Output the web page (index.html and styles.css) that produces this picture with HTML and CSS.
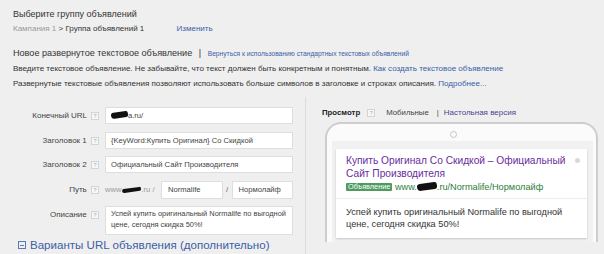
FILE: index.html
```html
<!DOCTYPE html>
<html lang="ru">
<head>
  <meta charset="UTF-8">
  <title>Новое объявление</title>
  <link rel="stylesheet" href="styles.css">
</head>
<body>

  <div class="header">
    <div class="title">Выберите группу объявлений</div>
    <div class="crumbs">
      <span class="muted">Кампания 1</span> &gt; Группа объявлений 1
      <a href="#" class="link change-link">Изменить</a>
    </div>
  </div>

  <div class="intro">
    <div class="heading">Новое развернутое текстовое объявление <span class="sep">|</span> <a href="#" class="link small-link">Вернуться к использованию стандартных текстовых объявлений</a></div>
    <p>Введите текстовое объявление. Не забывайте, что текст должен быть конкретным и понятным. <a href="#" class="link">Как создать текстовое объявление</a></p>
    <p>Развернутые текстовые объявления позволяют использовать больше символов в заголовке и строках описания. <a href="#" class="link">Подробнее...</a></p>
  </div>

  <div class="editor">
    <div class="form">
      <div class="row">
        <label class="label">Конечный URL <span class="help">?</span></label>
        <div class="field"><span class="blot"></span>a.ru/</div>
      </div>
      <div class="row">
        <label class="label">Заголовок 1 <span class="help">?</span></label>
        <div class="field">{KeyWord:Купить Оригинал} Со Скидкой</div>
      </div>
      <div class="row">
        <label class="label">Заголовок 2 <span class="help">?</span></label>
        <div class="field">Официальный Сайт Производителя</div>
      </div>
      <div class="row">
        <label class="label">Путь <span class="help">?</span></label>
        <div class="path">
          <span class="domain">www<span class="blot"></span>.ru /</span>
          <div class="field">Normalife</div>
          <span class="slash">/</span>
          <div class="field">Нормолайф</div>
        </div>
      </div>
      <div class="row">
        <label class="label">Описание <span class="help">?</span></label>
        <div class="field area">Успей купить оригинальный Normalife по выгодной цене, сегодня скидка 50%!</div>
      </div>
      <a href="#" class="more"><span class="toggle"></span>Варианты URL объявления (дополнительно)</a>
    </div>

    <div class="preview">
      <div class="tabs">
        <b>Просмотр</b><span class="help">?</span><span class="tab">Мобильные</span><span class="sep">|</span><a href="#" class="tab-link">Настольная версия</a>
      </div>
      <div class="phone">
        <div class="camera"></div>
        <div class="screen">
          <div class="ad">
            <div class="ad-head">
              <div class="ad-title">Купить Оригинал Со Скидкой – Официальный Сайт Производителя</div>
              <span class="dot"></span>
            </div>
            <div class="ad-url"><span class="badge">Объявление</span> www.<span class="blot"></span>.ru/Normalife/Нормолайф</div>
            <div class="ad-text">Успей купить оригинальный Normalife по выгодной цене, сегодня скидка 50%!</div>
          </div>
        </div>
      </div>
    </div>
  </div>

</body>
</html>
```

FILE: styles.css
```css
body {
  margin: 0;
  height: 254px;
  overflow: hidden;
  background: #efefef;
  font-family: "Liberation Sans", Arial, sans-serif;
  color: #333;
}

a {
  text-decoration: none;
}

.link {
  color: #3c5ea6;
}

.header {
  padding: 8px 13px 0;
}

.title {
  font-size: 9px;
  line-height: 13px;
}

.crumbs {
  font-size: 8px;
  line-height: 12px;
  margin-top: 2px;
}

.muted {
  color: #9a9a9a;
}

.change-link {
  margin-left: 30px;
}

.intro {
  padding: 11px 13px 0;
}

.heading {
  font-size: 9.1px;
  line-height: 14px;
}

.heading .sep {
  margin: 0 4px;
}

.small-link {
  font-size: 6.7px;
}

.intro p {
  margin: 0;
  font-size: 8.05px;
  line-height: 15px;
}

.editor {
  display: flex;
  margin-top: 6px;
  height: 158px;
}

.form {
  width: 293px;
  padding: 10px 12px 0 0;
  border-right: 1px solid #dcdcdc;
}

.row {
  display: flex;
  align-items: flex-start;
  margin-bottom: 7.5px;
}

.label {
  width: 99px;
  flex: none;
  text-align: right;
  font-size: 8px;
  line-height: 17px;
  color: #444;
  margin-right: 6px;
}

.help {
  display: inline-block;
  width: 6px;
  height: 6px;
  line-height: 6px;
  border: 1px solid #d4d4d4;
  background: #f7f7f7;
  color: #aaa;
  font-size: 5.5px;
  font-weight: normal;
  text-align: center;
  vertical-align: 0;
  margin-left: 2px;
}

.field {
  flex: 1;
  height: 17px;
  box-sizing: border-box;
  background: #fff;
  border: 1px solid #dedede;
  padding: 0 5px;
  font-size: 7.6px;
  line-height: 15px;
  color: #444;
  white-space: nowrap;
  overflow: hidden;
}

.path {
  flex: 1;
  display: flex;
  align-items: center;
}

.path .field {
  height: 18px;
  line-height: 16px;
  padding: 0 6px;
}

.domain {
  width: 56px;
  flex: none;
  color: #9a9a9a;
  font-size: 7.6px;
}

.slash {
  color: #666;
  font-size: 8px;
  width: 9px;
  text-align: center;
}

.area {
  height: 29px;
  white-space: normal;
  font-size: 7.45px;
  line-height: 10.5px;
  padding: 2px 1px 2px 5px;
}

.blot {
  display: inline-block;
  width: 17px;
  height: 6px;
  background: #111;
  border-radius: 4px 3px 3px 5px;
  transform: rotate(-8deg);
  vertical-align: 0;
}

.domain .blot {
  width: 19px;
  height: 4px;
  margin-left: 1px;
}

.more {
  display: flex;
  align-items: center;
  margin: -4px 0 0 18px;
  font-size: 11.55px;
  line-height: 13px;
  color: #3c5ea6;
}

.toggle {
  width: 6px;
  height: 6px;
  border: 1px solid #5b79b5;
  margin-right: 4px;
  position: relative;
}

.toggle::after {
  content: "";
  position: absolute;
  left: 1px;
  right: 1px;
  top: 2.5px;
  height: 1px;
  background: #5b79b5;
}

.preview {
  flex: 1;
  padding: 10px 6px 0 16px;
  overflow: hidden;
}

.tabs {
  font-size: 7.8px;
  line-height: 12px;
  color: #444;
}

.tabs b {
  color: #222;
}

.tabs .help {
  margin: 0 11px 0 7px;
}

.tabs .sep {
  margin: 0 5px 0 8px;
}

.tab-link {
  color: #4c3f95;
  font-size: 8px;
}

.phone {
  margin: 3px 0 0 3px;
  height: 118px;
  border: 2px solid #cdcdcd;
  border-bottom: none;
  border-radius: 16px 16px 0 0;
  background: #fbfbfb;
  padding: 0 3px 0 5px;
  overflow: hidden;
}

.camera {
  width: 5px;
  height: 5px;
  border: 1px solid #c4c4c4;
  border-radius: 50%;
  margin: 6.5px auto 3.5px;
  position: relative;
  left: -9px;
}

.screen {
  background: #f1f1f1;
  padding: 8px 6px 0 4px;
  height: 120px;
}

.ad {
  background: #fff;
  box-shadow: 0 1px 2px rgba(0, 0, 0, 0.18);
  padding: 5px 7px 8px 10px;
}

.ad-head {
  display: flex;
  align-items: flex-start;
}

.ad-title {
  flex: 1;
  font-size: 10.2px;
  line-height: 13px;
  color: #6a2d9e;
}

.dot {
  width: 5px;
  height: 5px;
  border-radius: 50%;
  background: #d8d8d8;
  margin: 4px 0 0 4px;
}

.ad-url {
  font-size: 9.2px;
  line-height: 12px;
  color: #2d7d3c;
  padding: 0 7px 5px 10px;
  border-bottom: 1px solid #ececec;
  margin: 1px -7px 0 -10px;
  white-space: nowrap;
}

.badge {
  display: inline-block;
  background: #4f9a5f;
  color: #fff;
  font-size: 7.3px;
  line-height: 8px;
  padding: 0 2px;
  border-radius: 1px;
  vertical-align: 1px;
}

.ad-url .blot {
  width: 20px;
  height: 7px;
}

.ad-text {
  margin-top: 8px;
  font-size: 9.2px;
  line-height: 11.5px;
  color: #333;
}
```
